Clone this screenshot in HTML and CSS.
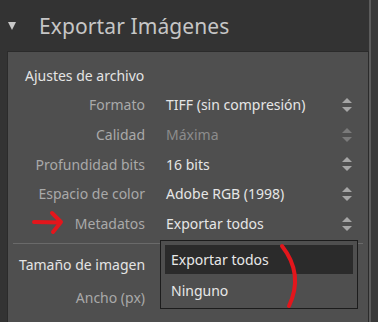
FILE: index.html
```html
<!DOCTYPE html>
<html lang="es">
<head>
    <meta charset="UTF-8">
    <title>Exportar Imágenes</title>
    <link rel="stylesheet" href="styles.css">
</head>
<body>
    <div class="window">
        <div class="main">
            <div class="header">
                <span class="twisty"></span>
                <h1>Exportar Imágenes</h1>
            </div>
            <div class="panel">
                <div class="section-title">Ajustes de archivo</div>
                <div class="row">
                    <span class="label">Formato</span>
                    <span class="value">TIFF (sin compresión)</span>
                    <span class="spin"></span>
                </div>
                <div class="row">
                    <span class="label">Calidad</span>
                    <span class="value disabled">Máxima</span>
                    <span class="spin dim"></span>
                </div>
                <div class="row">
                    <span class="label">Profundidad bits</span>
                    <span class="value">16 bits</span>
                    <span class="spin"></span>
                </div>
                <div class="row">
                    <span class="label">Espacio de color</span>
                    <span class="value">Adobe RGB (1998)</span>
                    <span class="spin"></span>
                </div>
                <div class="row">
                    <span class="label">Metadatos</span>
                    <span class="value">Exportar todos</span>
                    <span class="spin"></span>
                </div>
                <div class="divider"></div>
                <div class="section-title second">Tamaño de imagen</div>
                <div class="row last">
                    <span class="label">Ancho (px)</span>
                </div>
            </div>
        </div>
        <div class="rail"></div>
    </div>

    <div class="dropdown">
        <div class="option active">Exportar todos</div>
        <div class="option">Ninguno</div>
    </div>

    <svg class="mark-arrow" width="36" height="26" viewBox="0 0 36 26">
        <path d="M3 12 L29 12.5 M21 3 L30 12 L22 22" fill="none" stroke="#e3161c" stroke-width="4" stroke-linecap="round" stroke-linejoin="round"/>
    </svg>
    <svg class="mark-curve" width="30" height="70" viewBox="0 0 30 70">
        <path d="M4 4 Q26 32 11 64" fill="none" stroke="#e3161c" stroke-width="4" stroke-linecap="round"/>
    </svg>
</body>
</html>
```

FILE: styles.css
```css
body {
    margin: 0;
    background-color: #333333;
    font-family: "Noto Sans", "Open Sans", sans-serif;
    font-size: 14px;
    width: 378px;
    height: 322px;
    overflow: hidden;
    position: relative;
}

.window {
    display: flex;
    height: 322px;
}

.main {
    width: 369px;
}

.rail {
    width: 7px;
    border-left: 2px solid #5c5c5c;
    background-color: #393939;
}

.header {
    display: flex;
    align-items: center;
    height: 51px;
    padding-left: 8px;
    padding-top: 1px;
    box-sizing: border-box;
}

.twisty {
    width: 0;
    height: 0;
    border-left: 4.5px solid transparent;
    border-right: 4.5px solid transparent;
    border-top: 8px solid #c8c8c8;
    margin-right: 23px;
}

h1 {
    margin: 0;
    font-size: 21px;
    font-weight: normal;
    color: #c6c6c6;
    letter-spacing: 0.1px;
}

.panel {
    margin-left: 7px;
    background-color: #4f4f4f;
    border: 1px solid #2b2b2b;
    border-bottom: none;
    height: 280px;
    box-sizing: border-box;
}

.section-title {
    color: #e4e4e4;
    height: 29px;
    line-height: 29px;
    padding-left: 17px;
    margin-top: 9px;
}

.section-title.second {
    height: 28px;
    line-height: 28px;
    margin-top: 7px;
    padding-left: 11px;
}

.row {
    display: flex;
    align-items: center;
    height: 29.7px;
}

.row.last {
    margin-top: 3px;
}

.label {
    width: 137px;
    text-align: right;
    color: #a9a9a9;
}

.value {
    flex: 1;
    margin-left: 21px;
    color: #e6e6e6;
}

.value.disabled {
    color: #8c8c8c;
}

.spin {
    position: relative;
    width: 10px;
    height: 14px;
    margin-right: 16px;
}

.spin::before,
.spin::after {
    content: "";
    position: absolute;
    left: 0;
    border-left: 5px solid transparent;
    border-right: 5px solid transparent;
}

.spin::before {
    top: 0;
    border-bottom: 5px solid #a6a6a6;
}

.spin::after {
    bottom: 0;
    border-top: 5px solid #a6a6a6;
}

.spin.dim::before {
    border-bottom-color: #7a7a7a;
}

.spin.dim::after {
    border-top-color: #7a7a7a;
}

.divider {
    height: 1px;
    background-color: #6a6a6a;
    margin: 5px 5px 0 5px;
}

.dropdown {
    position: absolute;
    left: 160px;
    top: 240px;
    width: 198px;
    height: 69px;
    box-sizing: border-box;
    background-color: #4f4f4f;
    border: 1px solid #1c1c1c;
    padding: 4px;
}

.option {
    height: 29px;
    line-height: 29px;
    padding-left: 6px;
    color: #e8e8e8;
}

.option + .option {
    margin-top: 2px;
}

.option.active {
    background-color: #2b2b2b;
}

.mark-arrow {
    position: absolute;
    left: 31px;
    top: 210px;
}

.mark-curve {
    position: absolute;
    left: 278px;
    top: 242px;
}
```
